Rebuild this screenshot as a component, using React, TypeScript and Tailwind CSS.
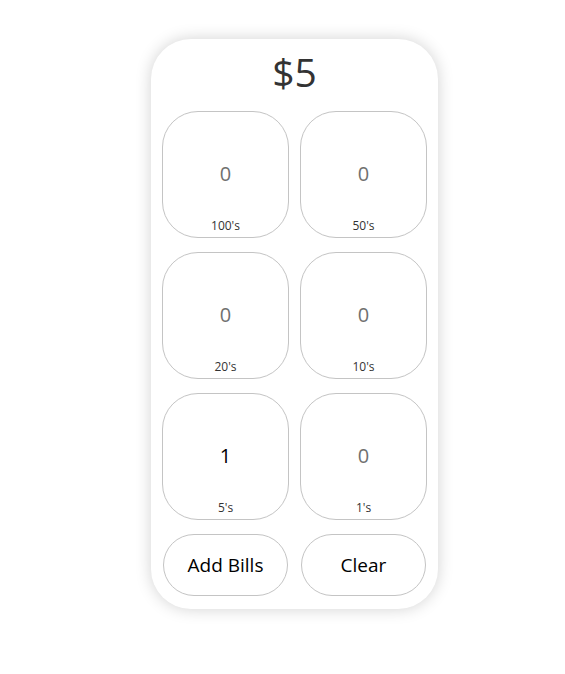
import React from "react";

const bills = [
  { count: 0, label: "100's" },
  { count: 0, label: "50's" },
  { count: 0, label: "20's" },
  { count: 0, label: "10's" },
  { count: 1, label: "5's" },
  { count: 0, label: "1's" },
];

export default function App() {
  return (
    <div className="min-h-[674px] w-[565px] bg-white" style={{ fontFamily: '"Open Sans", "Noto Sans", sans-serif' }}>
      <div className="flex pt-[39px] pl-[151px]">
        <div className="w-[287px] h-[570px] rounded-[40px] bg-white shadow-[0_0_16px_rgba(0,0,0,0.18)] px-[11px] flex flex-col">
          <div className="h-[72px] flex items-center justify-center pb-[8px]">
            <span className="text-[39px] leading-none text-[#333]">$5</span>
          </div>
          <div className="grid grid-cols-[127px_127px] gap-x-[11px] gap-y-[14px]">
            {bills.map((b) => (
              <div
                key={b.label}
                className="relative h-[127px] rounded-[36px] border border-[#c4c4c4] flex items-center justify-center"
              >
                <span className={`text-[20px] leading-none pb-[2px] ${b.count > 0 ? "text-black" : "text-[#707070]"}`}>
                  {b.count}
                </span>
                <span className="absolute bottom-[5px] left-0 right-0 text-center text-[12px] leading-none text-[#333]">
                  {b.label}
                </span>
              </div>
            ))}
          </div>
          <div className="grid grid-cols-[127px_127px] gap-x-[11px] mt-[14px]">
            <button className="mx-[1px] h-[62px] rounded-full border border-[#c4c4c4] bg-white text-[19px] text-black">
              Add Bills
            </button>
            <button className="mx-[1px] h-[62px] rounded-full border border-[#c4c4c4] bg-white text-[19px] text-black">
              Clear
            </button>
          </div>
        </div>
      </div>
    </div>
  );
}
